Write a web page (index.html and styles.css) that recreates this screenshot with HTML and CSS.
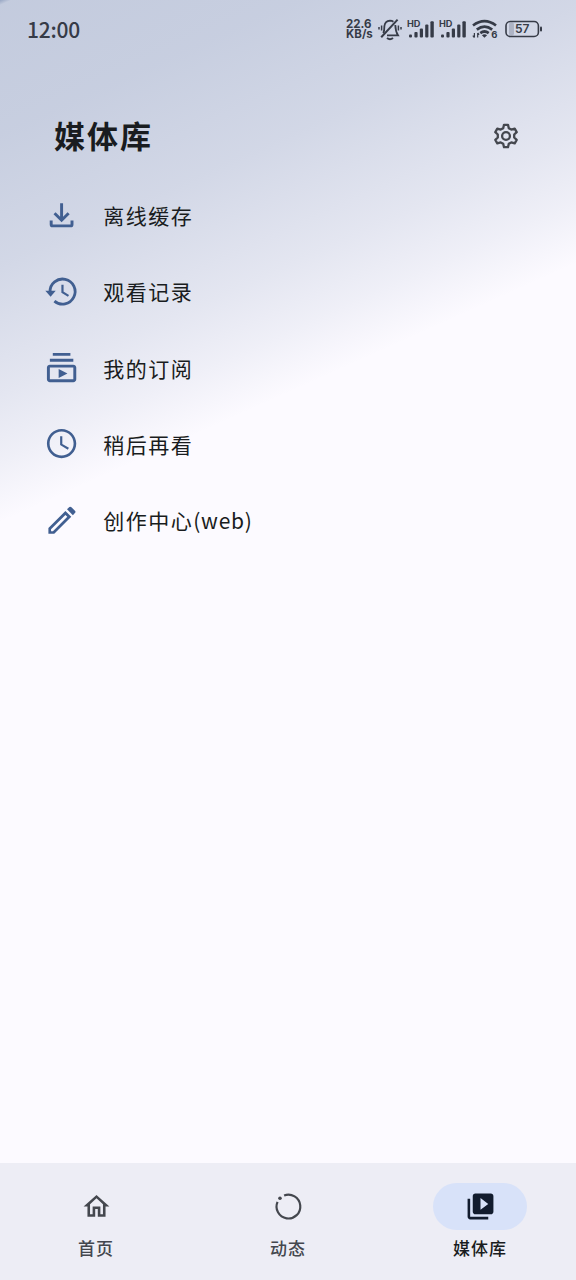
FILE: index.html
```html
<!DOCTYPE html>
<html lang="zh-CN">
<head>
<meta charset="utf-8">
<title>媒体库</title>
<link rel="stylesheet" href="styles.css">
</head>
<body>
<div class="screen">
  <header class="status">
    <span class="clock">12:00</span>
    <span class="speed"><span>22.6</span><span>KB/s</span></span>
    <svg class="bell" width="24" height="24" viewBox="0 0 24 24" fill="none" stroke="#363b47" stroke-width="1.8">
      <path d="M5.3 16.2Q6.4 14 6.4 9Q7 4 12 3.6Q14 3.6 15.4 4.8M17.3 8Q17.5 14.5 20 18.3H9"/>
      <path d="M3.2 20.2L19.6 2.6" stroke-width="2"/>
      <path d="M9 21q3 2.4 6 0" stroke-width="2"/>
      <path d="M3.6 8.5v5M1 10v2.5M20.4 8.5v5M23 10v2.5" stroke-width="1.5"/>
    </svg>
    <svg class="signal" width="28" height="20" viewBox="0 0 28 20" fill="#363b47">
      <text class="hd" x="0" y="8" textLength="13.5" lengthAdjust="spacingAndGlyphs">HD</text>
      <rect x="2" y="15.4" width="3" height="3.2" rx="1"/><rect x="7.4" y="13" width="3.2" height="5.6" rx="1"/><rect x="12.8" y="9.6" width="3.2" height="9" rx="1"/><rect x="18.2" y="5.6" width="3.2" height="13" rx="1"/><rect x="23.4" y="2.2" width="3.4" height="16.4" rx="1"/>
    </svg>
    <svg class="signal" width="28" height="20" viewBox="0 0 28 20" fill="#363b47">
      <text class="hd" x="0" y="8" textLength="13.5" lengthAdjust="spacingAndGlyphs">HD</text>
      <rect x="2" y="15.4" width="3" height="3.2" rx="1"/><rect x="7.4" y="13" width="3.2" height="5.6" rx="1"/><rect x="12.8" y="9.6" width="3.2" height="9" rx="1"/><rect x="18.2" y="5.6" width="3.2" height="13" rx="1"/><rect x="23.4" y="2.2" width="3.4" height="16.4" rx="1"/>
    </svg>
    <svg class="wifi" width="26" height="20" viewBox="0 0 26 20" fill="none" stroke="#363b47" stroke-width="2.7">
      <path d="M1 6.5Q12.5-2.2 24 6.5M4.8 10.6Q12.5 4.8 20.2 10.6M8.3 14.1Q12.5 10.9 16.7 14.1"/>
      <path d="M12.5 18.7l-2.6-2.4q2.6-2 5.2 0z" fill="#363b47" stroke="none"/>
      <path d="M2.4 14v4.5M.8 16.7l1.6 1.8M5.7 18.5V14M7.2 15.6L5.7 14" stroke-width="1.2"/>
      <text class="six" x="19.3" y="18.6" fill="#363b47" stroke="none">6</text>
    </svg>
    <svg class="battery" width="38" height="18" viewBox="0 0 38 18">
      <rect x="4" y="2.5" width="5" height="13" rx="2" fill="#aeb4c5"/>
      <rect x="1" y="1.5" width="32.4" height="15" rx="4.3" fill="none" stroke="#363b47" stroke-width="1.6"/>
      <rect x="35" y="6.5" width="2" height="5" rx="1" fill="#363b47"/>
      <text class="level" x="17.3" y="13.4" text-anchor="middle" fill="#363b47">57</text>
    </svg>
  </header>

  <div class="heading">
    <h1>媒体库</h1>
    <svg width="30" height="30" viewBox="-15 -15 30 30" fill="none" stroke="#44474e" stroke-width="2.3" stroke-linejoin="round">
      <path d="M-2-11.2H2L2.8-7.8L5.3-6.4L8.7-7.4L10.7-3.9L8.2-1.5V1.5L10.7 3.9L8.7 7.4L5.3 6.4L2.8 7.8L2 11.2H-2L-2.8 7.8L-5.3 6.4L-8.7 7.4L-10.7 3.9L-8.2 1.5V-1.5L-10.7-3.9L-8.7-7.4L-5.3-6.4L-2.8-7.8Z"/>
      <circle r="3.9"/>
    </svg>
  </div>

  <ul class="menu">
    <li><svg viewBox="0 0 24 24" fill="none" stroke="#415f91" stroke-width="2"><path d="M12 3.6V14.8M7.2 10.4l4.8 4.8 4.8-4.8M4.9 15.4V18q0 1 1 1H18.1q1 0 1-1V15.4"/></svg><span>离线缓存</span></li>
    <li><svg viewBox="0 0 24 24" fill="none" stroke="#415f91" stroke-width="1.9"><path d="M4.1 12.2A8.55 8.55 0 1 1 7.1 18.5"/><path d="M.9 11.5H8L4.5 15.6Z" fill="#415f91" stroke="none"/><path d="M12.6 7.4v5l4.1 2.5" stroke-width="1.5"/></svg><span>观看记录</span></li>
    <li><svg viewBox="0 0 24 24" fill="#415f91"><path d="M20 8H4V6h16v2zm-2-6H6v2h12V2zm4 10v8c0 1.1-.9 2-2 2H4c-1.1 0-2-.9-2-2v-8c0-1.1.9-2 2-2h16c1.1 0 2 .9 2 2zm-2 0H4v8h16v-8zm-10 .9v6.2l6-3.1z"/></svg><span>我的订阅</span></li>
    <li><svg viewBox="0 0 24 24" fill="#415f91"><path d="M11.99 2C6.47 2 2 6.48 2 12s4.47 10 9.99 10C17.52 22 22 17.52 22 12S17.52 2 11.99 2zM12 20.2c-4.53 0-8.2-3.67-8.2-8.2S7.47 3.8 12 3.8s8.2 3.67 8.2 8.2-3.67 8.2-8.2 8.2zm.5-13.2H11v6l5.25 3.15.75-1.23-4.5-2.67z"/></svg><span>稍后再看</span></li>
    <li><svg viewBox="0 0 24 24" fill="#415f91"><path fill-rule="evenodd" d="M14.6 5.4L18.6 9.4L7 21H3V17ZM14.6 8.1L4.8 17.9V19.2H6.1L15.9 9.4Z"/><path d="M15.7 4.3L17.3 2.8Q18 2.2 18.7 2.9L21.1 5.3Q21.8 6 21.2 6.7L19.7 8.3Z"/></svg><span>创作中心<span class="latin">(web)</span></span></li>
  </ul>

  <nav class="tabs">
    <div class="tab">
      <span class="pill"><svg viewBox="0 0 24 24" fill="#44474e"><path d="M12 5.69l5 4.5V18h-2v-6H9v6H7v-7.81l5-4.5M12 3L2 12h3v8h6v-6h2v6h6v-8h3L12 3z"/></svg></span>
      <span class="label">首页</span>
    </div>
    <div class="tab">
      <span class="pill"><svg viewBox="0 0 24 24" fill="none" stroke="#44474e" stroke-width="1.7"><path d="M8.6 3.5A9.2 9.2 0 1 1 3.5 8.4"/><circle cx="5.4" cy="5.6" r="1.4" fill="#44474e" stroke="none"/></svg></span>
      <span class="label">动态</span>
    </div>
    <div class="tab active">
      <span class="pill"><svg viewBox="0 0 24 24" fill="#121c2e"><path d="M4 6H2v14c0 1.1.9 2 2 2h14v-2H4V6zm16-4H8c-1.1 0-2 .9-2 2v12c0 1.1.9 2 2 2h12c1.1 0 2-.9 2-2V4c0-1.1-.9-2-2-2zm-8 12.5v-9l6 4.5-6 4.500z"/></svg></span>
      <span class="label">媒体库</span>
    </div>
  </nav>
</div>
</body>
</html>
```
FILE: styles.css
```css
* { box-sizing: border-box; }
body {
  margin: 0;
  font-family: "Noto Sans CJK SC", sans-serif;
  color: #191c20;
}
svg { display: block; flex: none; }
.screen {
  width: 576px;
  height: 1280px;
  display: flex;
  flex-direction: column;
  background:
    linear-gradient(155.8deg,
      rgba(65, 95, 145, .54) 0,
      rgba(65, 95, 145, .3) .34%,
      rgba(65, 95, 145, .281) 8.75%,
      rgba(65, 95, 145, .225) 17.2%,
      rgba(65, 95, 145, .131) 25.6%,
      rgba(65, 95, 145, .07) 29.8%,
      rgba(65, 95, 145, 0) 34%),
    #fcfaff;
}
.status {
  height: 58px;
  padding: 0 33px 0 27px;
  display: flex;
  align-items: center;
  color: #363b47;
}
.clock {
  flex: 1;
  font: 500 21px/30px "Noto Sans CJK SC", sans-serif;
  letter-spacing: -.2px;
}
.speed {
  display: flex;
  flex-direction: column;
  width: 32px;
  font: 700 11.5px/10px Inter, sans-serif;
}
.signal { margin-left: 5px; }
.signal + .signal { margin-left: 4px; }
.wifi { margin-left: 5px; }
.battery { margin-left: 7px; }
.hd { font: 700 8.5px Inter, sans-serif; }
.six { font: 700 9.500px Inter, sans-serif; }
.level { font: 600 12px Inter, sans-serif; }
.heading {
  height: 119px;
  padding: 36px 55px 0 54px;
  display: flex;
  justify-content: space-between;
}
.heading svg { margin-top: 27px; }
h1 {
  margin: 18px 0 0;
  font-size: 31px;
  line-height: 46px;
  font-weight: 700;
  letter-spacing: 2px;
}
.menu {
  flex: 1;
  margin: 0;
  padding: 0 0 0 44px;
  list-style: none;
}
.menu li {
  height: 76.3px;
  display: flex;
  align-items: center;
  gap: 24px;
  font-size: 21px;
  line-height: 30px;
  letter-spacing: 1.5px;
}
.menu svg { width: 35.2px; height: 35.2px; }
.latin { letter-spacing: .8px; }
.tabs {
  height: 117px;
  padding-top: 20px;
  display: flex;
  background: #ededf5;
}
.tab {
  flex: 1;
  display: flex;
  flex-direction: column;
  align-items: center;
}
.pill {
  width: 94px;
  height: 47px;
  border-radius: 24px;
  display: flex;
  align-items: center;
  justify-content: center;
}
.pill svg { width: 31px; height: 31px; }
.label {
  margin-top: 5px;
  font-size: 17px;
  line-height: 26px;
  font-weight: 500;
  letter-spacing: 1px;
  color: #44474e;
}
.active .pill { background: #d8e2f9; }
.active .label { color: #191c20; }
```
